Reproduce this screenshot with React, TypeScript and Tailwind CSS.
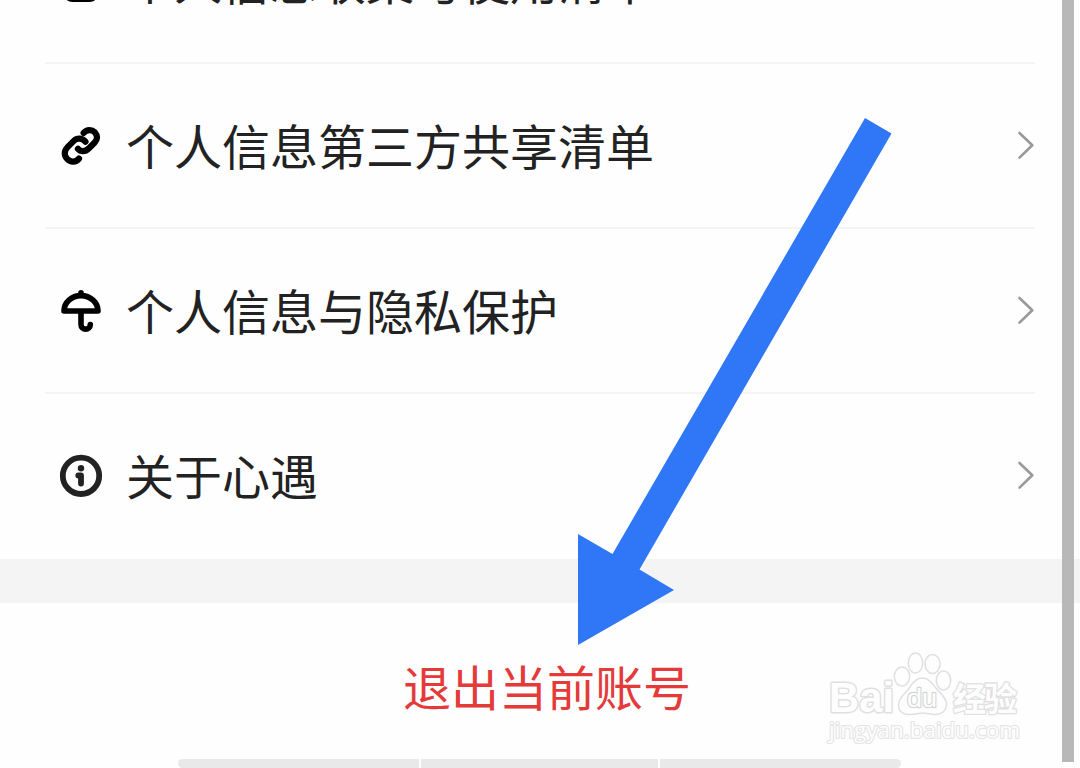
import type { ReactNode } from 'react';

interface SettingRow {
    label: string;
    icon: ReactNode;
    chevron: boolean;
}

function ListIcon() {
    return (
        <svg width="44" height="44" viewBox="0 0 44 44" fill="none" stroke="#000" strokeWidth="5">
            <rect x="6.5" y="3.5" width="31" height="37" rx="7" />
            <path d="M14 15h16M14 24h10" strokeLinecap="round" />
        </svg>
    );
}

function LinkIcon() {
    return (
        <svg width="44" height="44" viewBox="0 0 44 44" fill="none" stroke="#000" strokeWidth="6.2" strokeLinecap="round">
            <path d="M24.600 8.900C28 5.200 32.800 5.300 35.800 8.300C39 11.800 38.700 15.500 35.500 18.700L29.700 24.500C26.200 28 21.500 28 18.900 24.800" />
            <path d="M26.500 17.700C23.200 13.700 18 13.700 14.800 16.900L8.800 22.900C5 26.800 4.700 31.500 8.300 35.200C11.800 38.700 16.800 38.300 20 34.600" />
        </svg>
    );
}

function UmbrellaIcon() {
    return (
        <svg width="44" height="44" viewBox="0 0 44 44" fill="none" stroke="#000" strokeWidth="5.6" strokeLinecap="round" strokeLinejoin="round">
            <path d="M22 3.800v2.500M5 22C5 13.500 12.500 6.600 22 6.600s17 6.900 17 15.400z" />
            <path d="M22 23v12.500c0 6.200 9.300 6.200 9.300 0" />
        </svg>
    );
}

function InfoIcon() {
    return (
        <svg width="44" height="44" viewBox="0 0 44 44" fill="none" stroke="#222" strokeWidth="5.8" strokeLinecap="round">
            <circle cx="22" cy="21.800" r="18.200" />
            <circle cx="22" cy="14.200" r="3.200" fill="#222" stroke="none" />
            <path d="M19.300 21.500h2.700v8" strokeLinejoin="round" />
        </svg>
    );
}

function Chevron() {
    return (
        <svg className="-mt-[1px]" width="18" height="30" viewBox="0 0 18 30" fill="none" stroke="#999" strokeWidth="2.6" strokeLinecap="round" strokeLinejoin="round">
            <path d="M2.500 3l12.800 12.300L2.500 27.600" />
        </svg>
    );
}

const rows: SettingRow[] = [
    { label: '个人信息收集与使用清单', icon: <ListIcon />, chevron: false },
    { label: '个人信息第三方共享清单', icon: <LinkIcon />, chevron: true },
    { label: '个人信息与隐私保护', icon: <UmbrellaIcon />, chevron: true },
    { label: '关于心遇', icon: <InfoIcon />, chevron: true },
];

function Watermark() {
    return (
        <svg
            className="absolute left-[820px] top-[644px]"
            width="210"
            height="108"
            viewBox="0 0 210 108"
            fill="#fefefe"
            stroke="#e0e0e0"
            strokeWidth="1.5"
            strokeLinejoin="round"
        >
            <text x="9" y="68" fontSize="43" fontWeight="700" fontFamily="'Liberation Sans', sans-serif" paintOrder="stroke" strokeWidth="3" textLength="65" lengthAdjust="spacingAndGlyphs">Bai</text>
            <ellipse cx="82" cy="32.5" rx="7.7" ry="9.5" />
            <ellipse cx="95.5" cy="19" rx="7.2" ry="10" />
            <ellipse cx="112.5" cy="20" rx="7.5" ry="9.5" />
            <ellipse cx="123.5" cy="36.5" rx="7.2" ry="9.5" />
            <path d="M102.500 34c-6 0-9.500 4-12.500 9-4 6-11.500 10-11.500 18 0 7 5.500 10 12 9.500 5 0 8-1.500 12-1.500s8 1.500 12.500 1.500c7 0 11.500-4 11.500-10.500 0-7-7-11-11.500-17-3.500-5-7-9-12.500-9z" />
            <text x="87" y="63" fontSize="26" fontFamily="'Liberation Sans', sans-serif" paintOrder="stroke" strokeWidth="2.4" stroke="#d6d6d6" textLength="30" lengthAdjust="spacingAndGlyphs">du</text>
            <text x="133" y="67" fontSize="33" fontWeight="700" fontFamily="'Noto Sans CJK SC', sans-serif" paintOrder="stroke" strokeWidth="2.6" textLength="64">经验</text>
            <text x="9" y="94" fontSize="22" fontFamily="'Open Sans', sans-serif" paintOrder="stroke" strokeWidth="2.2" stroke="#e4e4e4" textLength="191" lengthAdjust="spacingAndGlyphs">jingyan.baidu.com</text>
        </svg>
    );
}

function Arrow() {
    return (
        <svg className="absolute left-[570px] top-[110px]" width="330" height="540" viewBox="570 110 330 540">
            <path d="M865 118L891.500 133.500L639.500 569.500L674 590L578 645V534L612.500 554z" fill="#2f77f6" />
        </svg>
    );
}

export default function App() {
    return (
        <div className="relative flex h-[768px] w-[1080px] flex-col overflow-hidden bg-[#fefefe] font-['Noto_Sans_CJK_SC',sans-serif] text-[48px] leading-[72px] text-[#222]">
            <div className="-mt-[101px] shrink-0 px-[45px]">
                {rows.map((row, i) => (
                    <div
                        key={row.label}
                        className={`flex h-[165px] items-center border-b-2 pl-[14px] ${i < rows.length - 1 ? 'border-[#f4f4f4]' : 'border-transparent'}`}
                    >
                        {row.icon}
                        <span className="-mt-[4px] ml-[23px] flex-1 whitespace-nowrap">{row.label}</span>
                        {row.chevron && <Chevron />}
                    </div>
                ))}
            </div>

            <div className="h-[44px] shrink-0 bg-[#f4f4f4]" />

            <button className="flex h-[156px] shrink-0 items-center justify-center pt-[8px] text-[#e43a3a]">
                <span className="mr-[-14px]">退出当前账号</span>
            </button>

            <div className="ml-[178px] flex h-[9px] w-[723px] shrink-0 gap-[2px] overflow-hidden rounded-full">
                <div className="w-[241px] bg-[#e9e9e9]" />
                <div className="w-[237px] bg-[#e9e9e9]" />
                <div className="flex-1 bg-[#e9e9e9]" />
            </div>

            <div className="absolute top-0 left-[1062px] h-[762px] w-[12px] bg-[#b8b8b8]" />
            <Watermark />
            <Arrow />
        </div>
    );
}
